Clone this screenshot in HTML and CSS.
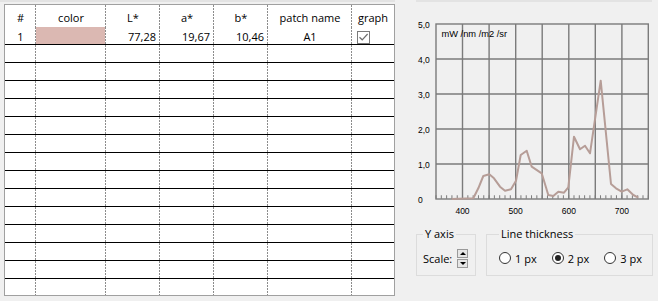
FILE: index.html
```html
<!DOCTYPE html>
<html lang="en">
<head>
    <meta charset="UTF-8">
    <meta name="viewport" content="width=device-width, initial-scale=1.0">
    <title>Patch Spectrum Viewer</title>
    <link rel="stylesheet" href="styles.css">
</head>
<body>
    <div class="app">
        <div class="left">
            <div class="strip"></div>
            <div class="grid-box">
                <div class="row head">
                    <div class="cell">#</div>
                    <div class="cell">color</div>
                    <div class="cell">L*</div>
                    <div class="cell">a*</div>
                    <div class="cell">b*</div>
                    <div class="cell">patch name</div>
                    <div class="cell">graph</div>
                </div>
                <div class="row">
                    <div class="cell center">1</div>
                    <div class="cell swatch"><span style="background:#dbb8b2"></span></div>
                    <div class="cell num">77,28</div>
                    <div class="cell num">19,67</div>
                    <div class="cell num">10,46</div>
                    <div class="cell center">A1</div>
                    <div class="cell">
                        <span class="check">
                            <svg width="13" height="12" viewBox="0 0 13 12"><path d="M2.5 6.2 L5.2 8.8 L10.6 3" fill="none" stroke="#6e6e6e" stroke-width="1.2"/></svg>
                        </span>
                    </div>
                </div>
                <div class="row"><div class="cell"></div><div class="cell"></div><div class="cell"></div><div class="cell"></div><div class="cell"></div><div class="cell"></div><div class="cell"></div></div>
                <div class="row"><div class="cell"></div><div class="cell"></div><div class="cell"></div><div class="cell"></div><div class="cell"></div><div class="cell"></div><div class="cell"></div></div>
                <div class="row"><div class="cell"></div><div class="cell"></div><div class="cell"></div><div class="cell"></div><div class="cell"></div><div class="cell"></div><div class="cell"></div></div>
                <div class="row"><div class="cell"></div><div class="cell"></div><div class="cell"></div><div class="cell"></div><div class="cell"></div><div class="cell"></div><div class="cell"></div></div>
                <div class="row"><div class="cell"></div><div class="cell"></div><div class="cell"></div><div class="cell"></div><div class="cell"></div><div class="cell"></div><div class="cell"></div></div>
                <div class="row"><div class="cell"></div><div class="cell"></div><div class="cell"></div><div class="cell"></div><div class="cell"></div><div class="cell"></div><div class="cell"></div></div>
                <div class="row"><div class="cell"></div><div class="cell"></div><div class="cell"></div><div class="cell"></div><div class="cell"></div><div class="cell"></div><div class="cell"></div></div>
                <div class="row"><div class="cell"></div><div class="cell"></div><div class="cell"></div><div class="cell"></div><div class="cell"></div><div class="cell"></div><div class="cell"></div></div>
                <div class="row"><div class="cell"></div><div class="cell"></div><div class="cell"></div><div class="cell"></div><div class="cell"></div><div class="cell"></div><div class="cell"></div></div>
                <div class="row"><div class="cell"></div><div class="cell"></div><div class="cell"></div><div class="cell"></div><div class="cell"></div><div class="cell"></div><div class="cell"></div></div>
                <div class="row"><div class="cell"></div><div class="cell"></div><div class="cell"></div><div class="cell"></div><div class="cell"></div><div class="cell"></div><div class="cell"></div></div>
                <div class="row"><div class="cell"></div><div class="cell"></div><div class="cell"></div><div class="cell"></div><div class="cell"></div><div class="cell"></div><div class="cell"></div></div>
                <div class="row"><div class="cell"></div><div class="cell"></div><div class="cell"></div><div class="cell"></div><div class="cell"></div><div class="cell"></div><div class="cell"></div></div>
                <div class="row"><div class="cell"></div><div class="cell"></div><div class="cell"></div><div class="cell"></div><div class="cell"></div><div class="cell"></div><div class="cell"></div></div>
            </div>
        </div>

        <div class="right">
            <div class="strip strip-right"></div>
            <svg class="chart" width="263" height="222" viewBox="395 2 263 222">
                <g stroke="#7b7b7b" stroke-width="1.4" fill="none">
                    <rect x="436" y="24" width="212.3" height="175"/>
                    <path d="M462.5 24V199M489.1 24V199M515.7 24V199M542.2 24V199M568.8 24V199M595.3 24V199M621.9 24V199M436 59H648.3M436 94H648.3M436 129H648.3M436 164H648.3"/>
                </g>
                <line x1="435.5" y1="197" x2="648.3" y2="197" stroke="#7b7b7b" stroke-width="3.5" stroke-dasharray="1 4.3075"/>
                <polyline class="curve" points="451.7,199 473.3,198.3 478.3,188.3 483.3,176 489.3,174.3 494,178.3 500,186.7 505,190.7 511,189.3 516,180.7 520.7,155 526.7,150.7 531.7,166.7 541.7,173.3 548.3,195 553.3,196 558.3,191.7 564,192.7 568.3,187.3 574,136.7 580,149.3 585,145.7 590,153.3 600.7,80.7 611,184 616,188.3 621.7,191.7 627.3,189.3 633.3,195 638.3,197.7"/>
                <text class="unit" x="441.5" y="37">mW /nm /m2 /sr</text>
                <g class="ylab">
                    <text x="418" y="27.5">5,0</text>
                    <text x="418" y="62.5">4,0</text>
                    <text x="418" y="97.5">3,0</text>
                    <text x="418" y="132.5">2,0</text>
                    <text x="418" y="167.5">1,0</text>
                    <text x="418" y="202.5">0</text>
                </g>
                <g class="xlab">
                    <text x="462.5" y="213.5">400</text>
                    <text x="515.7" y="213.5">500</text>
                    <text x="568.8" y="213.5">600</text>
                    <text x="621.9" y="213.5">700</text>
                </g>
            </svg>

            <div class="controls">
                <fieldset class="group yaxis">
                    <legend>Y axis</legend>
                    <div class="group-body">
                        <span>Scale:</span>
                        <span class="spin">
                            <span class="spin-btn up"></span>
                            <span class="spin-btn down"></span>
                        </span>
                    </div>
                </fieldset>
                <fieldset class="group thick">
                    <legend>Line thickness</legend>
                    <div class="group-body radios">
                        <span class="opt"><span class="radio"></span>1 px</span>
                        <span class="opt"><span class="radio on"></span>2 px</span>
                        <span class="opt"><span class="radio"></span>3 px</span>
                    </div>
                </fieldset>
            </div>
        </div>
    </div>
</body>
</html>
```

FILE: styles.css
```css
body { margin: 0; background: #f0f0f0; font-family: "Open Sans", "Liberation Sans", sans-serif; font-size: 11px; color: #000; }
.app { display: flex; width: 658px; height: 301px; overflow: hidden; }
.left { width: 395px; }
.right { width: 263px; }
.strip { height: 2px; background: #e3e3e3; }
.strip-right { margin: 0 6px 0 21px; }

.grid-box { margin: 2px 0 0 4px; width: 391px; height: 292px; box-sizing: border-box; border: 1px solid #a0a0a0; background: #fff; overflow: hidden; }
.row { display: grid; grid-template-columns: 31px 70px 54px 54px 54px 84px 42px; height: 18px; box-sizing: border-box; border-bottom: 1px solid #000; }
.row.head { height: 22px; border-bottom: 0; }
.cell { box-sizing: border-box; line-height: 15px; padding-top: 2px; white-space: nowrap;
        background: repeating-linear-gradient(to bottom, #8c8c8c 0 2px, transparent 2px 3px) right top / 1px 100% no-repeat; }
.cell:last-child { background: none; }
.head .cell { text-align: center; padding-top: 5px; }
.center { text-align: center; }
.num { text-align: right; padding-right: 4px; }
.swatch span { display: block; width: 69px; height: 17px; margin-top: -2px; }
.check { display: inline-block; width: 11px; height: 11px; margin: 2px 0 0 5px; border: 1px solid #7a7a7a; background: #fff; vertical-align: top; position: relative; }
.check svg { position: absolute; left: -1px; top: -1px; }

.chart { display: block; }
.curve { fill: none; stroke: #b69d97; stroke-width: 2; stroke-linejoin: round; }
.chart text { font-family: "Liberation Sans", sans-serif; font-size: 8.5px; fill: #000; }
.chart .unit { font-size: 9.3px; }
.xlab text { text-anchor: middle; }

.controls { display: flex; gap: 10px; margin: 3px 0 0 21px; }
.group { margin: 0; padding: 0 6px; border: 1px solid #dcdcdc; box-sizing: border-box; min-width: 0; }
.group legend { padding: 0 2px; line-height: 14px; }
.yaxis { width: 60px; }
.thick { width: 167px; padding-left: 12px; }
.group-body { display: flex; align-items: center; height: 34px; }

.spin { display: flex; flex-direction: column; gap: 1px; margin-left: 5px; }
.spin-btn { width: 11px; height: 9px; box-sizing: border-box; border: 1px solid #9a9a9a; background: #e6e6e6; position: relative; }
.spin-btn::after { content: ""; position: absolute; left: 2px; border-left: 3px solid transparent; border-right: 3px solid transparent; }
.up::after { top: 2px; border-bottom: 3px solid #000; }
.down::after { top: 2px; border-top: 3px solid #000; }

.radios { gap: 15px; }
.opt { display: flex; align-items: center; gap: 4px; }
.radio { width: 12px; height: 12px; box-sizing: border-box; border: 1px solid #333; border-radius: 50%; background: #fff; position: relative; }
.radio.on::after { content: ""; position: absolute; left: 2px; top: 2px; width: 6px; height: 6px; border-radius: 50%; background: #222; }
```
